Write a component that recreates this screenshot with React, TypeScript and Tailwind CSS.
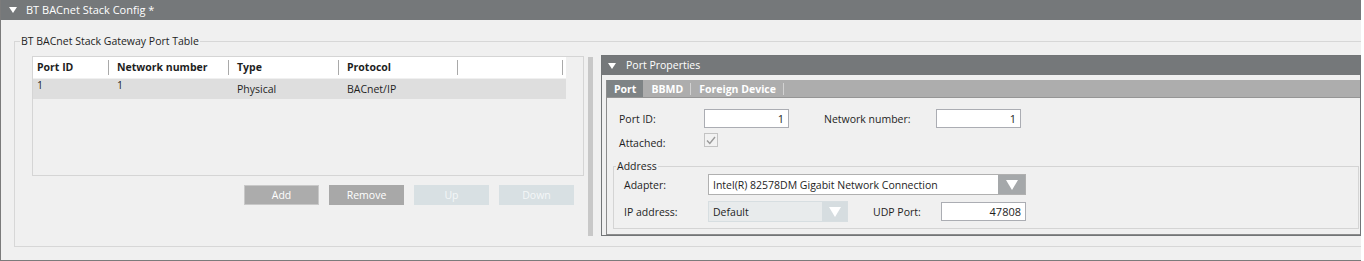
import React from "react";

function Tri({ w = 8, h = 6, color = "white", className = "" }: { w?: number; h?: number; color?: string; className?: string }) {
  return (
    <svg width={w} height={h} viewBox={`0 0 ${w} ${h}`} className={className}>
      <polygon points={`0,0 ${w},0 ${w / 2},${h}`} fill={color} />
    </svg>
  );
}

function HeaderCell({ label, w, pl }: { label: string; w: string; pl: string }) {
  return (
    <div className={`flex items-center h-full ${w}`}>
      <span className={`flex-1 font-bold pb-[2px] ${pl}`}>{label}</span>
      <div className="h-[15px] w-px bg-[#a9a9a9]" />
    </div>
  );
}

function Input({ value, w = "w-[85px]" }: { value: string; w?: string }) {
  return (
    <div className={`${w} h-[19px] border border-[#abadb3] bg-white flex items-center justify-end pr-[4px] leading-none text-[11px]`}>
      {value}
    </div>
  );
}

export default function App() {
  return (
    <div className="w-[1361px] h-[261px] bg-[#f0f0f0] border-l border-b border-[#7b7b7b] font-['Open_Sans',sans-serif] text-[10.5px] leading-[16px] text-[#1e1e1e] flex flex-col">
      <div className="h-[20px] shrink-0 bg-[#75787a] flex items-center text-white">
        <Tri className="ml-[8px]" />
        <span className="ml-[9px] text-[11px]">BT BACnet Stack Config *</span>
      </div>
      <div className="pl-[13px] pt-[13px]">
        <fieldset className="h-[214px] border border-r-0 border-[#d7d7d7]">
          <legend className="ml-[5px] px-[1px] leading-[16px]">BT BACnet Stack Gateway Port Table</legend>
          <div className="flex items-start">
            {/* left column */}
            <div className="ml-[17px] mt-[7px] w-[552px] flex flex-col">
              <div className="h-[120px] border border-[#d5d5d5] flex flex-col">
                <div className="w-[533px] h-[21px] bg-white flex">
                  <HeaderCell label="Port ID" w="w-[76px]" pl="pl-[4px]" />
                  <HeaderCell label="Network number" w="w-[120px]" pl="pl-[8px]" />
                  <HeaderCell label="Type" w="w-[110px]" pl="pl-[8px]" />
                  <HeaderCell label="Protocol" w="w-[119px]" pl="pl-[8px]" />
                  <HeaderCell label="" w="w-[105px]" pl="pl-[8px]" />
                </div>
                <div className="mt-[1px] w-[533px] h-[20px] bg-[#dedede] flex">
                  <div className="w-[76px] pl-[4px] self-start -mt-[2px]">1</div>
                  <div className="w-[120px] pl-[8px] self-start -mt-[2px]">1</div>
                  <div className="w-[110px] pl-[8px] self-center -mt-[1px]">Physical</div>
                  <div className="w-[119px] pl-[8px] self-center -mt-[1px]">BACnet/IP</div>
                </div>
              </div>
              <div className="mt-[9px] mr-[10px] flex justify-end gap-[10px]">
                <div className="w-[75px] h-[20px] bg-[#acacac] border border-[#c8c8c8] text-white flex items-center justify-center">Add</div>
                <div className="w-[75px] h-[20px] bg-[#a8a8a8] text-white flex items-center justify-center">Remove</div>
                <div className="w-[75px] h-[20px] bg-[#d8e0e3] text-[#f4f7f8] flex items-center justify-center">Up</div>
                <div className="w-[75px] h-[20px] bg-[#d8e0e3] text-[#f4f7f8] flex items-center justify-center">Down</div>
              </div>
            </div>
            {/* splitter */}
            <div className="ml-[4px] mt-[8px] w-[5px] h-[179px] bg-[#c8c8c8]" />
            {/* Port properties panel */}
            <div className="ml-[8px] mt-[6px] w-[760px] h-[181px] border border-[#727577] flex flex-col">
              <div className="h-[19px] shrink-0 bg-[#75787a] flex items-center text-white">
                <Tri className="ml-[6px]" />
                <span className="ml-[10px] -mt-[1px]">Port Properties</span>
              </div>
              <div className="flex-1 pl-[4px] pt-[5px] flex flex-col">
                <div className="flex-1 border-l border-b border-[#8c8c8c] flex flex-col">
                  <div className="h-[18px] shrink-0 bg-[#adadad] border-b border-[#959595] flex items-center text-white font-bold">
                    <div className="h-full bg-[#7e8385] px-[7px] flex items-center">Port</div>
                    <div className="pl-[8px] pr-[7px]">BBMD</div>
                    <div className="h-[12px] w-px bg-[#d2d2d2]" />
                    <div className="pl-[8px] pr-[7px]">Foreign Device</div>
                    <div className="h-[12px] w-px bg-[#d2d2d2]" />
                  </div>
                  <div className="pl-[12px] pt-[11px] flex flex-col">
                    <div className="flex items-center h-[19px]">
                      <div className="w-[85px]">Port ID:</div>
                      <Input value="1" />
                      <div className="ml-[35px] w-[112px]">Network number:</div>
                      <Input value="1" />
                    </div>
                    <div className="flex items-center mt-[5px] h-[14px]">
                      <div className="w-[85px] mt-[6px]">Attached:</div>
                      <div className="w-[14px] h-[14px] border border-[#c3c3c3] bg-[#f2f2f2] flex items-center justify-center">
                        <svg width="10" height="9" viewBox="0 0 10 9">
                          <polyline points="1,4.5 3.8,7.5 9,1" fill="none" stroke="#9a9a9a" strokeWidth="1.4" />
                        </svg>
                      </div>
                    </div>
                  </div>
                  <fieldset className="ml-[6px] mr-[1px] mt-[11px] border border-[#d4d4d4] pb-[6px]">
                    <legend className="ml-[2px] px-[1px] leading-[16px]">Address</legend>
                    <div className="flex items-center h-[21px]">
                      <div className="pl-[10px] w-[94px] pt-[1px]">Adapter:</div>
                      <div className="w-[318px] h-[21px] border border-[#b0b0b0] bg-white flex items-center">
                        <span className="flex-1 pl-[4px]">Intel(R) 82578DM Gigabit Network Connection</span>
                        <div className="w-[27px] h-full bg-[#a5a8aa] flex items-center justify-center">
                          <Tri w={12} h={10} />
                        </div>
                      </div>
                    </div>
                    <div className="flex items-center h-[21px] mt-[6px]">
                      <div className="pl-[10px] w-[94px] pt-[1px]">IP address:</div>
                      <div className="w-[140px] h-[21px] border border-[#d7dee1] bg-[#e8ebec] flex items-center">
                        <span className="flex-1 pl-[4px]">Default</span>
                        <div className="w-[25px] h-full bg-[#d6dde0] flex items-center justify-center">
                          <Tri w={12} h={10} />
                        </div>
                      </div>
                      <div className="ml-[25px] w-[68px] pt-[1px]">UDP Port:</div>
                      <Input value="47808" />
                    </div>
                  </fieldset>
                </div>
              </div>
            </div>
          </div>
        </fieldset>
      </div>
    </div>
  );
}
